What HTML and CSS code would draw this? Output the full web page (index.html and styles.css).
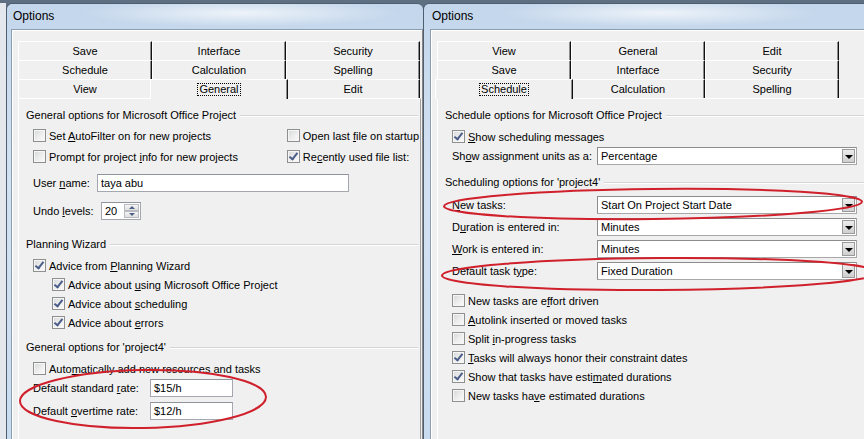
FILE: index.html
```html
<!DOCTYPE html>
<html lang="en">
<head>
  <meta charset="UTF-8">
  <title>Options</title>
  <link rel="stylesheet" href="styles.css">
</head>
<body>
<div class="desk">
  <div class="behind"></div>

  <!-- General tab -->
  <div class="win win-left">
    <div class="titlebar">Options</div>
    <div class="client">
      <div class="tabs">
        <div class="tab-row">
          <div class="tab">Save</div>
          <div class="tab">Interface</div>
          <div class="tab">Security</div>
        </div>
        <div class="tab-row">
          <div class="tab">Schedule</div>
          <div class="tab">Calculation</div>
          <div class="tab">Spelling</div>
        </div>
        <div class="tab-row">
          <div class="tab">View</div>
          <div class="tab active"><span class="focus">General</span></div>
          <div class="tab">Edit</div>
        </div>
      </div>

      <div class="page">
        <div class="group-title first"><span>General options for Microsoft Office Project</span></div>
        <div class="pair">
          <div>
            <div class="check tall first"><span class="cb"></span><span>Set <u>A</u>utoFilter on for new projects</span></div>
            <div class="check tall"><span class="cb"></span><span>Prompt for project <u>i</u>nfo for new projects</span></div>
          </div>
          <div class="pair-right">
            <div class="check tall first"><span class="cb"></span><span>Open last <u>f</u>ile on startup</span></div>
            <div class="check tall"><span class="cb on"></span><span>Re<u>c</u>ently used file list:</span></div>
          </div>
        </div>
        <div class="field user">
          <label>User <u>n</u>ame:</label>
          <div class="text wide">taya abu</div>
        </div>
        <div class="field undo">
          <label>Undo <u>l</u>evels:</label>
          <div class="spin">
            <span class="spin-val">20</span>
            <span class="spin-btns"><span class="up"></span><span class="down"></span></span>
          </div>
        </div>

        <div class="group-title wizard"><span>Planning Wizard</span></div>
        <div class="check first-after"><span class="cb on"></span><span>Advice from <u>P</u>lanning Wizard</span></div>
        <div class="check sub"><span class="cb on"></span><span>Advice about <u>u</u>sing Microsoft Office Project</span></div>
        <div class="check sub"><span class="cb on"></span><span>Advice about <u>s</u>cheduling</span></div>
        <div class="check sub"><span class="cb on"></span><span>Advice about <u>e</u>rrors</span></div>

        <div class="group-title project"><span>General options for 'project4'</span></div>
        <div class="check first-after"><span class="cb"></span><span>Auto<u>m</u>atically add new resources and tasks</span></div>
        <div class="field rate first">
          <label>Default standard <u>r</u>ate:</label>
          <div class="text short">$15/h</div>
        </div>
        <div class="field rate">
          <label>Default <u>o</u>vertime rate:</label>
          <div class="text short">$12/h</div>
        </div>
      </div>
    </div>
  </div>

  <!-- Schedule tab -->
  <div class="win win-right">
    <div class="titlebar">Options</div>
    <div class="client">
      <div class="tabs">
        <div class="tab-row">
          <div class="tab">View</div>
          <div class="tab">General</div>
          <div class="tab">Edit</div>
        </div>
        <div class="tab-row">
          <div class="tab">Save</div>
          <div class="tab">Interface</div>
          <div class="tab">Security</div>
        </div>
        <div class="tab-row">
          <div class="tab active"><span class="focus">Schedule</span></div>
          <div class="tab">Calculation</div>
          <div class="tab">Spelling</div>
        </div>
      </div>

      <div class="page">
        <div class="group-title first"><span>Schedule options for Microsoft Office Project</span></div>
        <div class="check first-after"><span class="cb on"></span><span><u>S</u>how scheduling messages</span></div>
        <div class="field combo-first">
          <label>Sh<u>o</u>w assignment units as a:</label>
          <div class="combo">Percentage<span class="drop"></span></div>
        </div>

        <div class="group-title sched"><span>Scheduling options for 'project4'</span></div>
        <div class="field combo-lead">
          <label><u>N</u>ew tasks:</label>
          <div class="combo">Start On Project Start Date<span class="drop"></span></div>
        </div>
        <div class="field combo-next">
          <label>D<u>u</u>ration is entered in:</label>
          <div class="combo">Minutes<span class="drop"></span></div>
        </div>
        <div class="field combo-next">
          <label><u>W</u>ork is entered in:</label>
          <div class="combo">Minutes<span class="drop"></span></div>
        </div>
        <div class="field combo-next">
          <label>Default task t<u>y</u>pe:</label>
          <div class="combo">Fixed Duration<span class="drop"></span></div>
        </div>

        <div class="check list-first"><span class="cb"></span><span>New tasks are e<u>f</u>fort driven</span></div>
        <div class="check"><span class="cb"></span><span><u>A</u>utolink inserted or moved tasks</span></div>
        <div class="check"><span class="cb"></span><span>Split <u>i</u>n-progress tasks</span></div>
        <div class="check"><span class="cb on"></span><span><u>T</u>asks will always honor their constraint dates</span></div>
        <div class="check"><span class="cb on"></span><span>Show that tasks have esti<u>m</u>ated durations</span></div>
        <div class="check"><span class="cb"></span><span>New tasks ha<u>v</u>e estimated durations</span></div>
      </div>
    </div>
  </div>

  <!-- red marker circles drawn over the screenshot -->
  <svg class="marks" width="864" height="439" viewBox="0 0 864 439">
    <ellipse cx="143" cy="399" rx="123" ry="29" transform="rotate(-1 143 399)"/>
    <ellipse cx="653" cy="204" rx="209" ry="15" transform="rotate(-0.6 653 204)"/>
    <ellipse cx="660" cy="274" rx="218" ry="16" transform="rotate(-0.4 660 274)"/>
  </svg>
</div>
</body>
</html>
```

FILE: styles.css
```css
body {
  margin: 0;
  font-family: "Liberation Sans", Arial, sans-serif;
  font-size: 11px;
  color: #000;
  overflow: hidden;
}

.desk {
  position: relative;
  display: flex;
  width: 864px;
  height: 439px;
  overflow: hidden;
  background: #5f6f82;
}

.behind {
  width: 6px;
  flex: none;
  margin-top: 3px;
  background: #e4e8ec;
}

.win {
  flex: none;
  display: flex;
  flex-direction: column;
  box-sizing: border-box;
  margin-top: 3px;
  border: 1px solid #4e5e71;
  border-bottom: none;
  border-radius: 6px 6px 0 0;
  background: linear-gradient(to bottom, #c3d6eb 0%, #d3e2f2 40%, #c9dcef 100%);
}

.win-left {
  width: 417px;
  padding-left: 4px;
  border-right: none;
}

.win-right {
  width: 470px;
  padding-left: 6px;
}

.titlebar {
  height: 25px;
  line-height: 24px;
  padding-left: 2px;
  font-size: 12px;
  background: radial-gradient(ellipse 160px 14px at 230px 9px, rgba(255,255,255,0.7), rgba(255,255,255,0));
}

.client {
  flex: 1;
  display: flex;
  flex-direction: column;
  background: #f0f0f0;
  border-top: 1px solid #8b9db1;
  border-left: 1px solid #8b9db1;
  box-shadow: inset 1px 1px 0 #fff;
  padding: 11px 0 0 6px;
}

.win-left .client {
  border-right: 1px solid #8a8580;
}

/* tabs */
.tabs {
  width: 402px;
}

.tab-row {
  display: flex;
  height: 19px;
}

.tab {
  flex: none;
  width: 134px;
  box-sizing: border-box;
  border-top: 1px solid #fff;
  border-left: 1px solid #fff;
  border-right: 1px solid #111;
  box-shadow: inset -1px 0 0 #8c8c8c;
  text-align: center;
  line-height: 18px;
  background: #f0f0f0;
}

.tab.active {
  position: relative;
  z-index: 1;
  width: 138px;
  height: 20px;
  margin: 0 -2px;
}

.focus {
  border: 1px dotted #000;
  padding: 0 1px;
  line-height: 11px;
  display: inline-block;
}

/* page */
.page {
  flex: 1;
  width: 403px;
  box-sizing: border-box;
  border-top: 1px solid #fff;
  border-left: 1px solid #fff;
  border-right: 1px solid #a0a0a0;
  padding-left: 7px;
}

.win-right .page {
  width: 440px;
  border-right: none;
}

.group-title {
  display: flex;
  align-items: center;
  height: 14px;
  padding-right: 2px;
  white-space: nowrap;
}

.group-title::after {
  content: "";
  flex: 1;
  margin-left: 4px;
  margin-top: 2px;
  border-top: 1px solid #d5d5d5;
  border-bottom: 1px solid #fff;
}

.group-title.first { margin-top: 9px; }
.group-title.wizard { margin-top: 17px; }
.group-title.project { margin-top: 8px; }
.group-title.sched { margin-top: 10px; }

.check {
  display: flex;
  align-items: center;
  height: 19px;
  padding-left: 7px;
  white-space: nowrap;
}

.check.tall { height: 21px; }
.check.tall.first { margin-top: 3px; }
.check.first-after { margin-top: 5px; }
.check.list-first { margin-top: 11px; }
.check.sub { padding-left: 26px; }

.pair {
  display: flex;
}

.pair-right {
  margin-left: auto;
  padding-right: 1px;
}

.pair-right .check {
  padding-left: 0;
}

.cb {
  position: relative;
  flex: none;
  width: 13px;
  height: 13px;
  box-sizing: border-box;
  margin-right: 3px;
  border: 1px solid #8e8f8f;
  background: linear-gradient(135deg, #d6d7d9 0%, #eeeeee 55%, #fbfbfb 100%);
  box-shadow: inset 0 0 0 1px #f6f6f6;
}

.cb.on::after {
  content: "";
  position: absolute;
  left: 3px;
  top: 0;
  width: 3px;
  height: 7px;
  border-right: 2px solid #4a5c88;
  border-bottom: 2px solid #4a5c88;
  transform: rotate(38deg);
}

/* label + control rows */
.field {
  display: flex;
  align-items: center;
  height: 18px;
  padding-left: 7px;
  white-space: nowrap;
}

.field label {
  flex: none;
}

.field.user { margin-top: 7px; }
.field.user label { width: 64px; }
.field.undo { margin-top: 10px; }
.field.undo label { width: 68px; }
.field.rate { margin-top: 5px; }
.field.rate.first { margin-top: 1px; }
.field.rate label { width: 117px; }

.win-right .field label { width: 145px; }
.field.combo-first { margin-top: 1px; }
.field.combo-lead { margin-top: 7px; }
.field.combo-next { margin-top: 4px; }

.text {
  height: 18px;
  box-sizing: border-box;
  border: 1px solid #a4a7ad;
  border-top-color: #8f949b;
  background: #fff;
  padding-left: 3px;
  line-height: 16px;
}

.text.wide { width: 252px; }
.text.short { width: 83px; }

.spin {
  display: flex;
  width: 40px;
  height: 18px;
  box-sizing: border-box;
  border: 1px solid #a4a7ad;
  border-top-color: #8f949b;
  background: #fff;
}

.spin-val {
  flex: 1;
  padding-left: 3px;
  line-height: 16px;
}

.spin-btns {
  display: flex;
  flex-direction: column;
  width: 15px;
  margin: 1px 1px 1px 0;
}

.spin-btns span {
  position: relative;
  flex: 1;
  border: 1px solid #b8bcc2;
  background: linear-gradient(#f6f6f6, #dedede);
}

.spin-btns .up::after,
.spin-btns .down::after {
  content: "";
  position: absolute;
  left: 4px;
  top: 1px;
  border-left: 3px solid transparent;
  border-right: 3px solid transparent;
}

.spin-btns .up::after { border-bottom: 3px solid #4d6185; }
.spin-btns .down::after { border-top: 3px solid #4d6185; }

.combo {
  position: relative;
  width: 260px;
  height: 18px;
  box-sizing: border-box;
  border: 1px solid #8c8c8c;
  border-right-color: #a8a8a8;
  border-bottom-color: #a8a8a8;
  background: #fff;
  padding-left: 3px;
  line-height: 16px;
}

.drop {
  position: absolute;
  right: 1px;
  top: 1px;
  width: 13px;
  height: 14px;
  box-sizing: border-box;
  border: 1px solid #9a9a9a;
  background: linear-gradient(#ececec, #cfcfcf);
}

.drop::after {
  content: "";
  position: absolute;
  left: 2px;
  top: 5px;
  border-left: 4px solid transparent;
  border-right: 4px solid transparent;
  border-top: 4px solid #000;
}

.marks {
  position: absolute;
  left: 0;
  top: 0;
  pointer-events: none;
}

.marks ellipse {
  fill: none;
  stroke: #d0202c;
  stroke-width: 2;
}
```
